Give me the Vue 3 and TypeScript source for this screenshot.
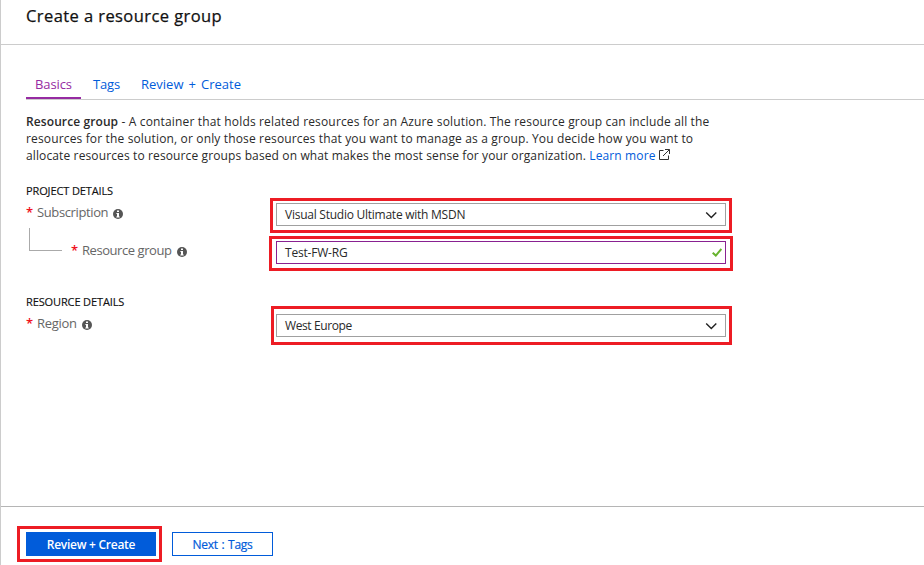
<script setup lang="ts">
import { ref } from 'vue'

const tabs = ['Basics', 'Tags', 'Review + Create']
const activeTab = ref('Basics')
</script>

<template>
  <main class="blade">
    <header class="blade-header"><h1>Create a resource group</h1></header>

    <div class="content">
      <nav class="tabs">
        <a
          v-for="(tab, i) in tabs"
          :key="tab"
          :class="['tab', 'tab-' + i, { active: tab === activeTab }]"
          @click="activeTab = tab"
        ><span>{{ tab }}</span></a>
      </nav>

      <p class="intro">
        <span class="l1"><strong>Resource group</strong> - A container that holds related resources for an Azure solution. The resource group can include all the</span><br />
        <span class="l2">resources for the solution, or only those resources that you want to manage as a group. You decide how you want to</span><br />
        <span class="l3">allocate resources to resource groups based on what makes the most sense for your organization. <a class="link">Learn more</a></span>
        <svg class="external" width="11" height="11" viewBox="0 0 11 11"><path d="M4.5 1.5H.5v9h9V6.5M6 .5h4.5V5M10.3.7 4 7" /></svg>
      </p>

      <section class="group project">
        <h2>PROJECT DETAILS</h2>
        <div class="row subscription">
          <label><b class="req">*</b><span class="name">Subscription</span>
            <svg class="info" width="10" height="10" viewBox="0 0 10 10"><circle cx="5" cy="5" r="5" /><path d="M4 1.5h2v1.6H4zM3.4 4H6v3.5h.7v1H3.3v-1H4V5h-.6z" /></svg>
          </label>
          <div class="field">
            <span class="value v-sub">Visual Studio Ultimate with MSDN</span>
            <svg class="chevron" width="12" height="8" viewBox="0 0 12 8"><path d="M1.2 1.5 6.3 6.6l5-5.1" /></svg>
            <i class="mark mark-sub"></i>
          </div>
        </div>
        <div class="row rg">
          <i class="branch"></i>
          <label><b class="req">*</b><span class="name">Resource group</span>
            <svg class="info" width="10" height="10" viewBox="0 0 10 10"><circle cx="5" cy="5" r="5" /><path d="M4 1.5h2v1.6H4zM3.4 4H6v3.5h.7v1H3.3v-1H4V5h-.6z" /></svg>
          </label>
          <div class="field focused">
            <span class="value v-rg">Test-FW-RG</span>
            <svg class="check" width="10" height="9" viewBox="0 0 10 9"><path d="M.7 4.7 3.8 7.6 9.4 1" /></svg>
            <i class="mark mark-rg"></i>
          </div>
        </div>
      </section>

      <section class="group resource">
        <h2>RESOURCE DETAILS</h2>
        <div class="row region">
          <label><b class="req">*</b><span class="name">Region</span>
            <svg class="info" width="10" height="10" viewBox="0 0 10 10"><circle cx="5" cy="5" r="5" /><path d="M4 1.5h2v1.6H4zM3.4 4H6v3.5h.7v1H3.3v-1H4V5h-.6z" /></svg>
          </label>
          <div class="field">
            <span class="value v-region">West Europe</span>
            <svg class="chevron" width="12" height="8" viewBox="0 0 12 8"><path d="M1.2 1.5 6.3 6.6l5-5.1" /></svg>
            <i class="mark mark-region"></i>
          </div>
        </div>
      </section>
    </div>

    <footer class="actions">
      <button class="primary"><span>Review + Create</span><i class="mark mark-create"></i></button>
      <button class="secondary"><span>Next : Tags</span></button>
    </footer>
  </main>
</template>

<style>
html, body { background: #fff; overflow: hidden; }
</style>

<style scoped>
* { box-sizing: border-box; }
.blade {
  display: flex;
  flex-direction: column;
  width: 924px;
  height: 565px;
  border-left: 1px solid #ccc;
  background: #fff;
  color: #2a2a2a;
  font: 12px/17px "Segoe UI", "Open Sans", "Noto Sans", sans-serif;
  white-space: nowrap;
}
h1, h2, p { margin: 0; }
.blade-header { height: 45px; flex: none; padding: 5px 0 0 25px; border-bottom: 1px solid #ccc; }
h1 { font-size: 16.5px; line-height: 22px; font-weight: 400; letter-spacing: .42px; color: #111; -webkit-text-stroke: .25px #111; }
.content { flex: 1; padding-left: 25px; }
.tabs { display: flex; height: 55px; padding-top: 30px; border-bottom: 1px solid #ccc; }
.tab {
  height: 24px;
  font-size: 13px;
  line-height: 18px;
  color: #015cda;
  cursor: pointer;
}
.tab-0 { width: 55px; padding-left: 9px; }
.tab-1 { width: 48px; padding-left: 12px; letter-spacing: -.15px; }
.tab-2 { padding-left: 12px; word-spacing: 1.7px; }
.tab.active { color: #962ba2; border-bottom: 2px solid #962ba2; letter-spacing: -.1px; }
.intro { margin-top: 13px; height: 51px; }
.l1 { letter-spacing: .16px; }
.l2 { letter-spacing: .15px; }
.l3 { letter-spacing: .125px; }
.intro strong { font-weight: 600; letter-spacing: .1px; }
.link { color: #015cda; }
.external { fill: none; stroke: #333; stroke-width: 1; margin-left: 3px; }
.group h2 { font-size: 11px; line-height: 15px; font-weight: 400; letter-spacing: -.12px; color: #111; -webkit-text-stroke: .15px #111; }
.project { margin-top: 19px; height: 111px; }
.row { display: flex; position: relative; }
label { display: flex; align-items: center; width: 250px; height: 18px; font-size: 13px; color: #666; }
.name { letter-spacing: -.38px; }
.region .name { letter-spacing: -.3px; }
.req { width: 11px; color: #f01020; font-weight: 600; }
.info { margin: 4px 0 0 5px; }
.info circle { fill: #555; }
.info path { fill: #fff; }
.subscription { margin-top: 5px; height: 38px; }
.region { margin-top: 5px; }
.rg label { width: 205px; }
.rg .name { letter-spacing: -.44px; }
.branch { width: 33px; height: 23px; margin: -13px 9px 0 3px; border: solid #aaa; border-width: 0 0 1px 1px; }
.field {
  position: relative;
  display: flex;
  align-items: center;
  justify-content: space-between;
  width: 450px;
  height: 23px;
  padding: 0 8px;
  border: 1px solid #a0a0a0;
}
.field.focused { border-color: #892191; padding-right: 3px; }
.v-sub { letter-spacing: -.25px; }
.v-rg { letter-spacing: -.2px; }
.v-region { letter-spacing: -.4px; }
.chevron { fill: none; stroke: #222; stroke-width: 1.4; }
.check { fill: none; stroke: #67b32e; stroke-width: 2; }
.mark { position: absolute; border: 3px solid #ed1c24; pointer-events: none; }
.mark-sub { left: -7px; right: -7px; top: -6px; bottom: -8px; }
.mark-rg { left: -8px; right: -8px; top: -6px; bottom: -8px; }
.mark-region { left: -6px; right: -7px; top: -9px; bottom: -9px; }
.actions { display: flex; align-items: flex-start; gap: 16px; height: 59px; flex: none; border-top: 1px solid #b5b5b5; padding: 25px 0 0 25px; }
button { position: relative; height: 24px; padding: 2px 0 0; border: 1px solid #015cda; border-radius: 0; font: 12px/20px "Segoe UI", "Open Sans", "Noto Sans", sans-serif; }
.primary { width: 130px; background: #015cda; color: #fff; font-weight: 600; letter-spacing: -.27px; }
.secondary { width: 101px; background: #fff; color: #015cda; letter-spacing: -.25px; word-spacing: .8px; -webkit-text-stroke: .2px #015cda; }
.mark-create { left: -10px; right: -7px; top: -7px; bottom: -7px; }
</style>
